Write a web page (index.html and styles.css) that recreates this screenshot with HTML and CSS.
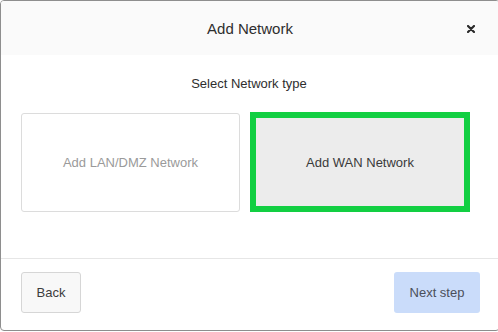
FILE: index.html
```html
<!DOCTYPE html>
<html lang="en">
<head>
<meta charset="utf-8">
<title>Add Network</title>
<link rel="stylesheet" href="styles.css">
</head>
<body>
<div class="modal">
  <div class="modal-header">
    <span></span>
    <h1 class="title">Add Network</h1>
    <button class="close" aria-label="Close">
      <svg width="8" height="8" viewBox="0 0 8 8"><path d="M1 1 L7 7 M7 1 L1 7" stroke="#2b2b2b" stroke-width="2.2" stroke-linecap="round"/></svg>
    </button>
  </div>
  <div class="modal-body">
    <p class="subtitle">Select Network type</p>
    <div class="cards">
      <div class="card">Add LAN/DMZ Network</div>
      <div class="card selected">Add WAN Network</div>
    </div>
  </div>
  <div class="modal-footer">
    <button class="btn btn-back">Back</button>
    <button class="btn btn-next">Next step</button>
  </div>
</div>
</body>
</html>
```
FILE: styles.css
```css
* { box-sizing: border-box; }
html, body {
  margin: 0;
  padding: 0;
  width: 498px;
  height: 332px;
  overflow: hidden;
  background: #ffffff;
  font-family: "Liberation Sans", Arial, sans-serif;
  color: #333333;
}
.modal {
  width: 500px;
  height: 331px;
  border: 1px solid #8e8e8e;
  border-radius: 4px;
  background: #ffffff;
  display: flex;
  flex-direction: column;
  overflow: hidden;
}
.modal-header {
  height: 54px;
  background: #fafafa;
  display: grid;
  grid-template-columns: 1fr auto 1fr;
  align-items: center;
}
.title {
  margin: 0;
  font-size: 15px;
  font-weight: normal;
  color: #2e2e2e;
  line-height: 18px;
  padding-top: 1px;
}
.close {
  justify-self: end;
  margin-right: 24px;
  padding: 0;
  border: 0;
  background: none;
  width: 8px;
  height: 8px;
  display: flex;
  margin-top: 2px;
}
.modal-body {
  padding: 21px 0 46px 0;
}
.subtitle {
  margin: 0;
  text-align: center;
  font-size: 13px;
  line-height: 16px;
  color: #2e2e2e;
  padding-right: 2px;
}
.cards {
  margin-top: 20px;
  padding-left: 20px;
  display: grid;
  grid-template-columns: 219px 220px;
  column-gap: 10px;
  align-items: end;
}
.card {
  height: 99px;
  border: 1px solid #dcdcdc;
  border-radius: 3px;
  display: flex;
  align-items: center;
  justify-content: center;
  font-size: 13px;
  color: #9a9a9a;
}
.card.selected {
  height: 100px;
  border: 6px solid #12cf42;
  border-radius: 0;
  background: #ececec;
  color: #3a3a3a;
}
.modal-footer {
  border-top: 1px solid #e6e6e6;
  padding: 13px 19px 0 20px;
  display: flex;
  justify-content: space-between;
}
.btn {
  height: 41px;
  border-radius: 3px;
  font-family: "Liberation Sans", Arial, sans-serif;
  font-size: 13px;
  color: #3c3c3c;
  padding: 0;
  display: flex;
  align-items: center;
  justify-content: center;
}
.btn-back {
  width: 60px;
  background: #f8f8f8;
  border: 1px solid #d6d6d6;
}
.btn-next {
  width: 86px;
  background: #cadcfa;
  border: 0;
  color: #4a4f5a;
}
```
